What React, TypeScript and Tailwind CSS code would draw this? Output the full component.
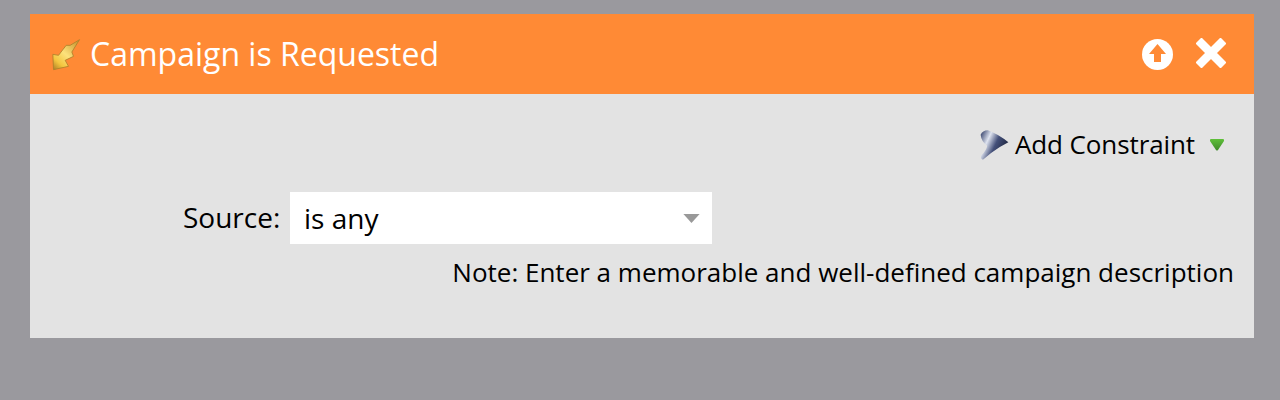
export default function App() {
  return (
    <div className="h-[400px] w-[1280px] overflow-hidden bg-[#9a999e] pl-[30px] pt-[14px] text-black" style={{ fontFamily: '"Open Sans", sans-serif' }}>
      <div className="h-[324px] w-[1224px] bg-[#e3e3e3]">
        <div className="flex h-[80px] items-center bg-[#ff8a35] pl-[20px] pr-[28px]">
          <svg width="32" height="35" viewBox="60 60 95 105" className="shrink-0">
            <defs>
              <linearGradient id="bolt" x1="0.9" y1="0" x2="0.1" y2="1">
                <stop offset="0" stopColor="#c9952f" />
                <stop offset="0.5" stopColor="#fce27c" />
                <stop offset="0.8" stopColor="#f3c53f" />
                <stop offset="1" stopColor="#b8892a" />
              </linearGradient>
            </defs>
            <path d="M148 68 L120 85 L108 85 L85 115 L68 112 L70 158 L115 148 L105 130 L130 118 L125 105 Z" fill="url(#bolt)" stroke="#ad7f2a" strokeWidth="2.5" strokeLinejoin="round" />
          </svg>
          <span className="ml-[8px] grow text-[32px] leading-none text-white">Campaign is Requested</span>
          <svg width="31" height="31" viewBox="0 0 31 31" className="shrink-0">
            <circle cx="15.5" cy="15.5" r="15.5" fill="#fff" />
            <path d="M15.5 5 L24 15 H19 V23 H12 V15 H7 Z" fill="#ff8a35" />
          </svg>
          <svg width="30" height="30" viewBox="0 0 30 30" className="ml-[23px] mb-[2px] shrink-0">
            <path d="M5.5 5.5 L24.5 24.5 M24.5 5.5 L5.5 24.5" stroke="#fff" strokeWidth="8.5" strokeLinecap="square" />
          </svg>
        </div>
        <div className="flex justify-end pr-[29px] pt-[33px]">
          <div className="flex h-[36px] items-center">
            <svg width="31" height="32" viewBox="25 25 95 97" className="shrink-0">
              <defs>
                <linearGradient id="funnel" x1="0" y1="0.1" x2="1" y2="0.6">
                  <stop offset="0" stopColor="#39456e" />
                  <stop offset="0.3" stopColor="#dfe4f0" />
                  <stop offset="0.58" stopColor="#44507a" />
                  <stop offset="1" stopColor="#1a2138" />
                </linearGradient>
              </defs>
              <path d="M30 42 Q36 28 52 28 Q85 40 115 65 Q85 80 62 98 L37 119 Q28 116 32 106 Q48 90 50 76 Q32 62 30 42 Z" fill="url(#funnel)" />
            </svg>
            <span className="ml-[5px] mb-[2px] text-[26px] leading-none tracking-[-0.1px]">Add Constraint</span>
            <svg width="16" height="13" viewBox="0 0 16 13" className="ml-[14px] mb-[2px] shrink-0">
              <defs>
                <linearGradient id="tri" x1="0" y1="0" x2="0" y2="1">
                  <stop offset="0" stopColor="#5fc03a" />
                  <stop offset="1" stopColor="#3f8a2a" />
                </linearGradient>
              </defs>
              <path d="M2 1 H14 Q15.5 1 15 3 L9 12 Q8 13 7 12 L1 3 Q0.5 1 2 1 Z" fill="url(#tri)" />
            </svg>
          </div>
        </div>
        <div className="mt-[29px] flex items-center pl-[153px]">
          <span className="mb-[2px] w-[107px] text-[28px] leading-none">Source:</span>
          <div className="flex h-[52px] w-[422px] items-center justify-between bg-white pl-[14px] pr-[12px]">
            <span className="text-[28px] leading-none">is any</span>
            <svg width="17" height="9" viewBox="0 0 18 10" className="shrink-0">
              <path d="M0 0 H18 L9 10 Z" fill="#999" />
            </svg>
          </div>
        </div>
        <div className="mt-[15px] flex justify-end pr-[20px] text-[26px] leading-none">
          Note: Enter a memorable and well-defined campaign description
        </div>
      </div>
    </div>
  );
}
